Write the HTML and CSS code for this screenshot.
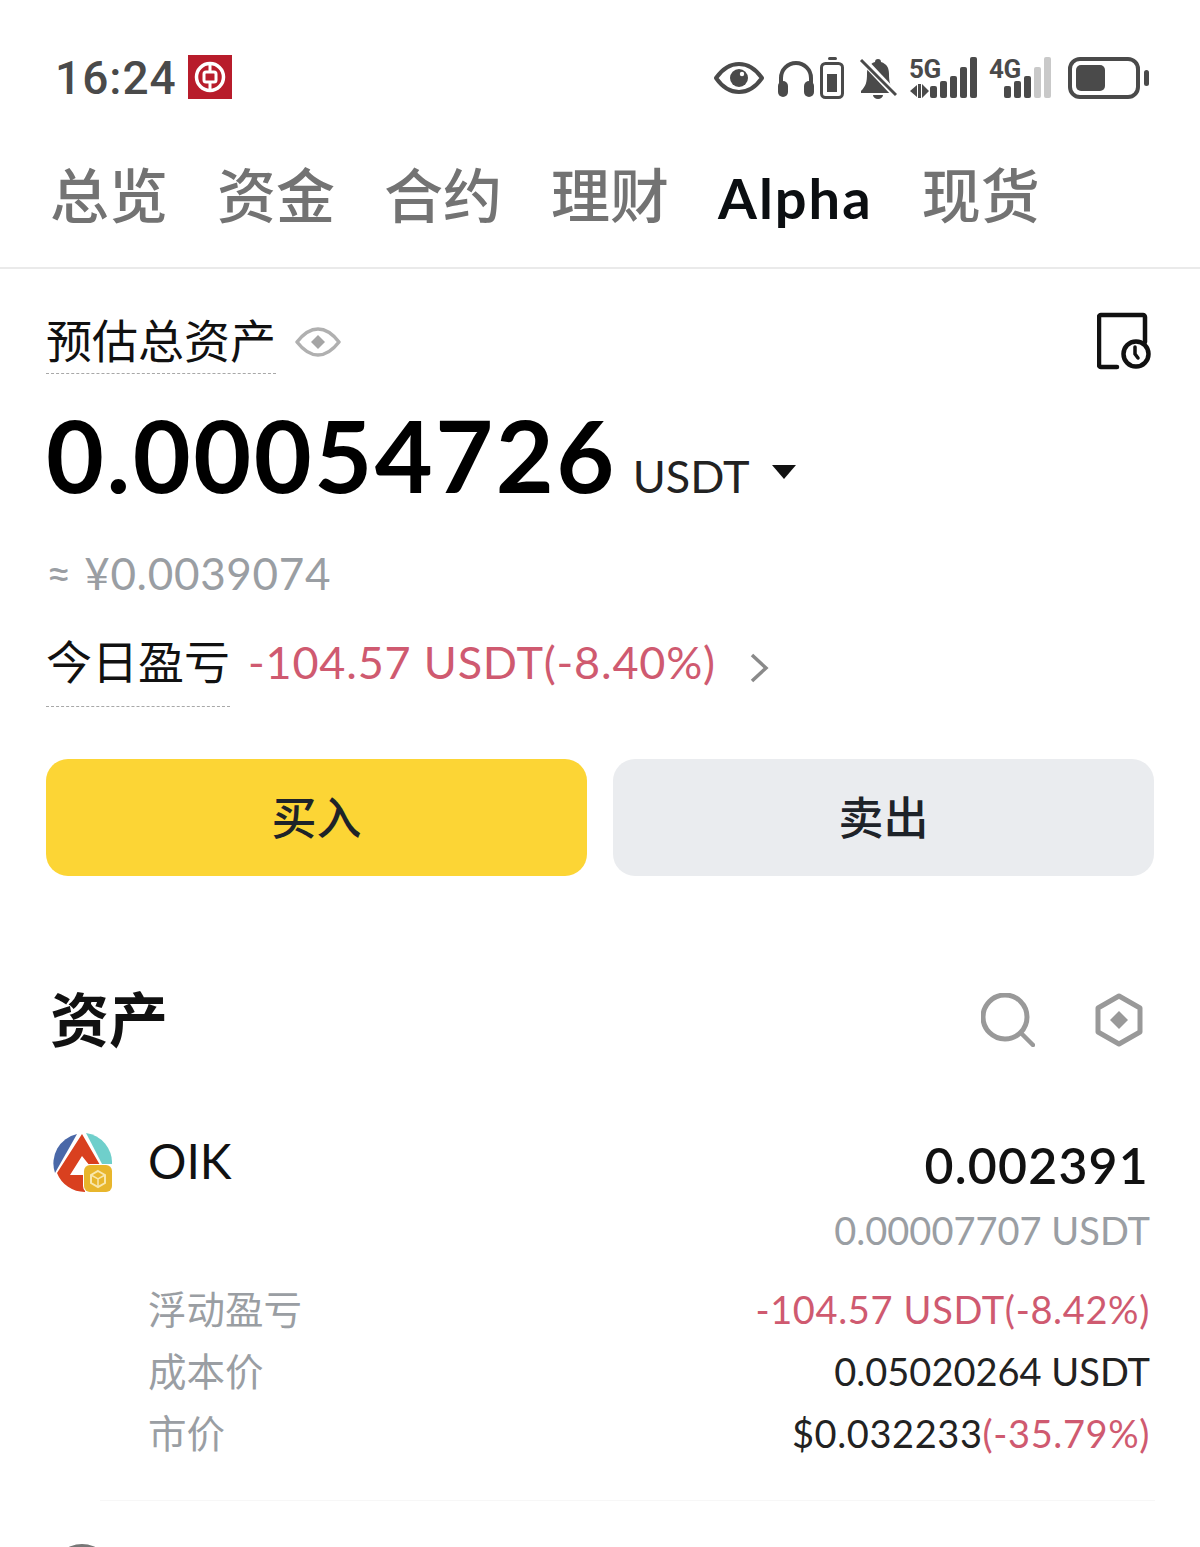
FILE: index.html
```html
<!DOCTYPE html>
<html>
<head>
<meta charset="utf-8">
<title>资产</title>
<link rel="stylesheet" href="styles.css">
</head>
<body>

<div id="phone">

  <div class="status-bar">
    <div class="status-left">
      <span class="clock">16:24</span>
      <svg class="app-badge" viewBox="0 0 44 44">
        <rect width="44" height="44" fill="#b81c2b"/>
        <circle cx="22" cy="22" r="13.5" fill="none" stroke="#fff" stroke-width="3.5"/>
        <rect x="16" y="17" width="12" height="10" rx="2" fill="none" stroke="#fff" stroke-width="3"/>
        <path d="M22 8v9M22 27v9" stroke="#fff" stroke-width="3"/>
      </svg>
    </div>
    <div class="status-right">
      <svg class="st-eye" viewBox="0 0 50 34">
        <path d="M2 17C9 7 16 3 25 3s16 4 23 14c-7 10-14 14-23 14S9 27 2 17z" fill="none" stroke="#4a4a4a" stroke-width="4" stroke-linejoin="round"/>
        <circle cx="25" cy="17" r="9" fill="#4a4a4a"/>
        <circle cx="28" cy="13" r="2.2" fill="#fff"/>
      </svg>
      <svg class="st-headset" viewBox="0 0 38 38">
        <path d="M4 24V19a15 15 0 0 1 30 0v5" fill="none" stroke="#4a4a4a" stroke-width="4"/>
        <rect x="1" y="22" width="10" height="16" rx="5" fill="#4a4a4a"/>
        <rect x="27" y="22" width="10" height="16" rx="5" fill="#4a4a4a"/>
      </svg>
      <svg class="st-case" viewBox="0 0 24 42">
        <rect x="8" y="0" width="9" height="3" rx="1.5" fill="#4a4a4a"/>
        <rect x="1.5" y="6.5" width="21" height="34" rx="4" fill="none" stroke="#4a4a4a" stroke-width="3"/>
        <rect x="7" y="17" width="10" height="18" fill="#4a4a4a"/>
      </svg>
      <svg class="st-bell" viewBox="0 0 38 42">
        <path d="M19 2c2 0 3 1 3 3 6 2 8 6 8 12 0 8 1 12 6 17v2H2v-2c5-5 6-9 6-17 0-6 2-10 8-12 0-2 1-3 3-3z" fill="#4a4a4a"/>
        <path d="M14 38h10a5 4 0 0 1-10 0z" fill="#4a4a4a"/>
        <path d="M3 2l34 36" stroke="#fff" stroke-width="7"/>
        <path d="M2 3l35 35" stroke="#4a4a4a" stroke-width="3"/>
      </svg>
      <div class="st-signal">
        <span class="st-net">5G</span>
        <svg viewBox="0 0 68 42">
          <path d="M0 34l7-6v12zM8 27h3v14H8zM12 27l7 7-7 7z" fill="#4a4a4a"/>
          <rect x="20" y="29" width="7" height="12" rx="2" fill="#4a4a4a"/>
          <rect x="30" y="24" width="7" height="17" rx="2" fill="#4a4a4a"/>
          <rect x="40" y="19" width="7" height="22" rx="2" fill="#4a4a4a"/>
          <rect x="50" y="10" width="7" height="31" rx="2" fill="#4a4a4a"/>
          <rect x="60" y="0" width="7" height="41" rx="2" fill="#4a4a4a"/>
        </svg>
      </div>
      <div class="st-signal st-signal-4g">
        <span class="st-net">4G</span>
        <svg viewBox="0 0 62 42">
          <rect x="14" y="29" width="7" height="12" rx="2" fill="#4a4a4a"/>
          <rect x="24" y="24" width="7" height="17" rx="2" fill="#4a4a4a"/>
          <rect x="34" y="19" width="7" height="22" rx="2" fill="#4a4a4a"/>
          <rect x="44" y="10" width="7" height="31" rx="2" fill="#c9c9c9"/>
          <rect x="54" y="0" width="7" height="41" rx="2" fill="#c9c9c9"/>
        </svg>
      </div>
      <svg class="st-battery" viewBox="0 0 82 42">
        <rect x="2" y="2" width="68" height="38" rx="10" fill="none" stroke="#4a4a4a" stroke-width="4"/>
        <rect x="8" y="8" width="29" height="26" rx="5" fill="#4a4a4a"/>
        <rect x="76" y="13" width="5" height="16" rx="2.500" fill="#4a4a4a"/>
      </svg>
    </div>
  </div>

  <div class="tabs">
    <span class="tab">总览</span>
    <span class="tab">资金</span>
    <span class="tab">合约</span>
    <span class="tab">理财</span>
    <span class="tab tab-active">Alpha</span>
    <span class="tab">现货</span>
  </div>

  <div class="summary">
    <div class="summary-head">
      <div class="summary-title">
        <span class="dotted">预估总资产</span>
        <svg class="eye-small" viewBox="0 0 46 32">
          <path d="M2 16C9 7 15 3 23 3s14 4 21 13c-7 9-13 13-21 13S9 25 2 16z" fill="none" stroke="#b0b0b0" stroke-width="3.500" stroke-linejoin="round"/>
          <path d="M23 9l7 7-7 7-7-7z" fill="#a5a5a5"/>
        </svg>
      </div>
      <svg class="history" viewBox="0 0 56 60">
        <path d="M20 55H4a2 2 0 0 1-2-2V5a2 2 0 0 1 2-2h42a2 2 0 0 1 2 2v25" fill="none" stroke="#111" stroke-width="4.500" stroke-linecap="round"/>
        <circle cx="39" cy="42" r="12.500" fill="none" stroke="#111" stroke-width="4.500"/>
        <path d="M38 35v7l3 4" fill="none" stroke="#111" stroke-width="3.500" stroke-linecap="round"/>
      </svg>
    </div>

    <div class="balance">
      <span class="balance-num">0.00054726</span>
      <span class="balance-unit">USDT</span>
      <span class="caret"></span>
    </div>

    <div class="fiat">≈ ¥0.0039074</div>

    <div class="pnl">
      <span class="dotted pnl-label">今日盈亏</span>
      <span class="pnl-value red">-104.57 USDT(-8.40%)</span>
      <svg class="chevron" viewBox="0 0 20 32">
        <path d="M3 3l14 13L3 29" fill="none" stroke="#8a8a8a" stroke-width="3.500"/>
      </svg>
    </div>

    <div class="actions">
      <button class="btn btn-buy">买入</button>
      <button class="btn btn-sell">卖出</button>
    </div>
  </div>

  <div class="assets">
    <div class="assets-head">
      <h2>资产</h2>
      <div class="assets-tools">
        <svg class="tool-search" viewBox="0 0 54 54">
          <circle cx="24" cy="24" r="22" fill="none" stroke="#999" stroke-width="5"/>
          <path d="M40 40l12 12" stroke="#999" stroke-width="4.500" stroke-linecap="round"/>
        </svg>
        <svg class="tool-hex" viewBox="0 0 48 54">
          <path d="M24 3l21 12v24L24 51 3 39V15z" fill="none" stroke="#999" stroke-width="5" stroke-linejoin="round"/>
          <path d="M24 18l9 9-9 9-9-9z" fill="#999"/>
        </svg>
      </div>
    </div>

    <div class="asset">
      <div class="asset-top">
        <div class="asset-name">
          <svg class="coin" viewBox="0 0 60 60">
            <path d="M25 1A30 30 0 0 0 3 40z" fill="#4a68a8"/>
            <path d="M34 0A30 30 0 0 1 60 31H50z" fill="#6fcfcb"/>
            <path d="M30 1L48 32 42 38 30 23 18 42H33V59A30 30 0 0 1 5 40z" fill="#d9401f"/>
            <rect x="31" y="31" width="29" height="29" rx="7" fill="#fff"/>
            <rect x="32" y="32" width="28" height="27" rx="6" fill="#e8b62c"/>
            <path d="M46 38l7 4v8l-7 4-7-4v-8z" fill="none" stroke="#f8e7ac" stroke-width="2"/>
            <path d="M39 42l7 4 7-4M46 46v8" fill="none" stroke="#f8e7ac" stroke-width="1.500"/>
          </svg>
          <span class="coin-name">OIK</span>
        </div>
        <div class="asset-amount">
          <span class="amount-main">0.002391</span>
          <span class="amount-sub">0.00007707 USDT</span>
        </div>
      </div>
      <div class="asset-rows">
        <span class="row-label">浮动盈亏</span>
        <span class="row-value row-loss">-104.57 USDT(-8.42%)</span>
        <span class="row-label">成本价</span>
        <span class="row-value">0.05020264 USDT</span>
        <span class="row-label">市价</span>
        <span class="row-value row-price">$0.032233<span class="red">(-35.79%)</span></span>
      </div>
    </div>
    <div class="asset-divider"></div>
    <div class="asset-next"></div>
  </div>

</div>

</body>
</html>
```

FILE: styles.css
```css
* {
  box-sizing: border-box;
}

html, body {
  margin: 0;
  height: 100%;
}

body {
  font-family: Lato, "Noto Sans CJK SC", sans-serif;
  background: #fff;
  color: #111;
  overflow: hidden;
}

#phone {
  width: 1200px;
  height: 1547px;
  overflow: hidden;
}

svg {
  display: block;
  flex: none;
}

/* status bar */
.status-bar {
  height: 155px;
  padding: 0 50px 0 55px;
  display: flex;
  justify-content: space-between;
  align-items: center;
}

.status-left {
  display: flex;
  align-items: center;
  gap: 11px;
}

.clock {
  font-family: Roboto, sans-serif;
  font-size: 46px;
  font-weight: 500;
  letter-spacing: 1px;
  color: #4a4a4a;
}

.app-badge {
  width: 44px;
  height: 44px;
  margin-top: -2px;
}

.status-right {
  display: flex;
  align-items: center;
}

.st-eye { width: 50px; height: 34px; margin-right: 13px; }
.st-headset { width: 38px; height: 38px; margin-right: 5px; }
.st-case { width: 24px; height: 42px; margin-right: 15px; }
.st-bell { width: 38px; height: 42px; margin-right: 13px; }
.st-signal { position: relative; width: 68px; height: 42px; margin-right: 12px; }
.st-signal-4g { width: 62px; margin-right: 16px; }
.st-battery { width: 82px; height: 42px; }

/* network label sits over the empty corner of the signal bars */
.st-net {
  position: absolute;
  top: -1px;
  left: -1px;
  font-family: Roboto, sans-serif;
  font-size: 26px;
  line-height: 26px;
  font-weight: 700;
  letter-spacing: -0.500px;
  color: #4a4a4a;
}

/* tabs */
.tabs {
  height: 114px;
  padding: 0 50px 38px;
  display: flex;
  align-items: center;
  gap: 49px;
  border-bottom: 2px solid #eaeaea;
}

.tab {
  font-size: 59px;
  font-weight: 500;
  color: #737373;
}

.tab-active {
  font-family: Lato, sans-serif;
  font-weight: 700;
  font-size: 56px;
  letter-spacing: 2px;
  margin-top: 10px;
  color: #0b0e11;
}

/* summary block */
.summary {
  padding: 42px 46px 0;
}

.summary-head {
  display: flex;
  justify-content: space-between;
  align-items: flex-start;
  height: 64px;
}

.summary-title {
  display: flex;
  align-items: center;
  gap: 19px;
}

.dotted {
  font-size: 46px;
  line-height: 60px;
  border-bottom: 1px dashed #a8a8a8;
  padding-bottom: 2px;
}

.eye-small {
  width: 46px;
  height: 32px;
  margin-top: -2px;
}

.history {
  width: 56px;
  height: 60px;
  margin-top: 1px;
  margin-right: 1px;
}

.balance {
  display: flex;
  align-items: baseline;
  margin-top: 25px;
  height: 108px;
}

.balance-num {
  font-size: 100px;
  font-weight: 700;
  line-height: 108px;
  letter-spacing: 2.500px;
  color: #000;
}

.balance-unit {
  font-size: 45px;
  margin-left: 16px;
  color: #222;
}

.caret {
  width: 0;
  height: 0;
  border-left: 12px solid transparent;
  border-right: 12px solid transparent;
  border-top: 14px solid #111;
  margin-left: 22px;
  align-self: center;
  margin-top: 36px;
}

.fiat {
  font-size: 44px;
  line-height: 56px;
  letter-spacing: 0.700px;
  margin-top: 37px;
  color: #9a9ea3;
}

.pnl {
  display: flex;
  align-items: flex-start;
  margin-top: 31px;
  height: 75px;
}

.pnl-label {
  font-size: 46px;
  padding-bottom: 14px;
}

.pnl-value {
  font-size: 45px;
  line-height: 60px;
  letter-spacing: 0.800px;
  margin-left: 18px;
}

.chevron {
  width: 20px;
  height: 32px;
  margin-left: 33px;
  margin-top: 20px;
}

.red {
  color: #cf5a70;
}

.actions {
  display: grid;
  grid-template-columns: 1fr 1fr;
  gap: 26px;
  margin-top: 52px;
}

.btn {
  height: 117px;
  padding: 0 0 5px;
  border: none;
  border-radius: 22px;
  font-family: "Noto Sans CJK SC", sans-serif;
  font-size: 45px;
  font-weight: 500;
  color: #1e2329;
}

.btn-buy {
  background-color: #fcd535;
}

.btn-sell {
  background-color: #eaecef;
}

/* asset list */
.assets {
  padding: 0 50px;
}

.assets-head {
  display: flex;
  justify-content: space-between;
  align-items: center;
  margin-top: 106px;
  height: 76px;
}

h2 {
  margin: 0;
  font-size: 59px;
  font-weight: 700;
  line-height: 76px;
}

.assets-tools {
  display: flex;
  align-items: center;
  gap: 60px;
  margin-right: 7px;
}

.tool-search {
  width: 54px;
  height: 54px;
}

.tool-hex {
  width: 48px;
  height: 54px;
}

.asset {
  margin-top: 74px;
}

.asset-top {
  display: flex;
  justify-content: space-between;
}

.asset-name {
  display: flex;
  gap: 36px;
  align-items: flex-start;
}

.coin {
  width: 60px;
  height: 60px;
  margin-top: 1px;
  margin-left: 2px;
}

.coin-name {
  font-size: 48px;
  line-height: 58px;
  color: #111;
}

.asset-amount {
  display: flex;
  flex-direction: column;
  align-items: flex-end;
}

.amount-main {
  font-size: 50px;
  font-weight: 600;
  line-height: 66px;
  letter-spacing: 1.200px;
  margin-right: 1px;
}

.amount-sub {
  font-size: 38px;
  line-height: 50px;
  margin-top: 7px;
  color: #9a9ea3;
}

.asset-rows {
  display: grid;
  grid-template-columns: auto auto;
  justify-content: space-between;
  grid-auto-rows: 62px;
  align-items: center;
  margin-top: 21px;
  padding-left: 98px;
}

.row-label {
  font-size: 38.500px;
  color: #9a9ea3;
}

.row-value {
  font-size: 38px;
  padding-top: 3px;
  text-align: right;
  color: #222;
}

.row-loss {
  letter-spacing: 0.650px;
  color: #cf5a70;
}

.row-price {
  letter-spacing: 0.600px;
}

.asset-divider {
  margin: 38px -5px 0 50px;
  border-top: 1px solid #f7f7f7;
}

.asset-next {
  width: 60px;
  height: 60px;
  margin: 43px 0 0 2px;
  border-radius: 50%;
  background-color: #777;
}
```
